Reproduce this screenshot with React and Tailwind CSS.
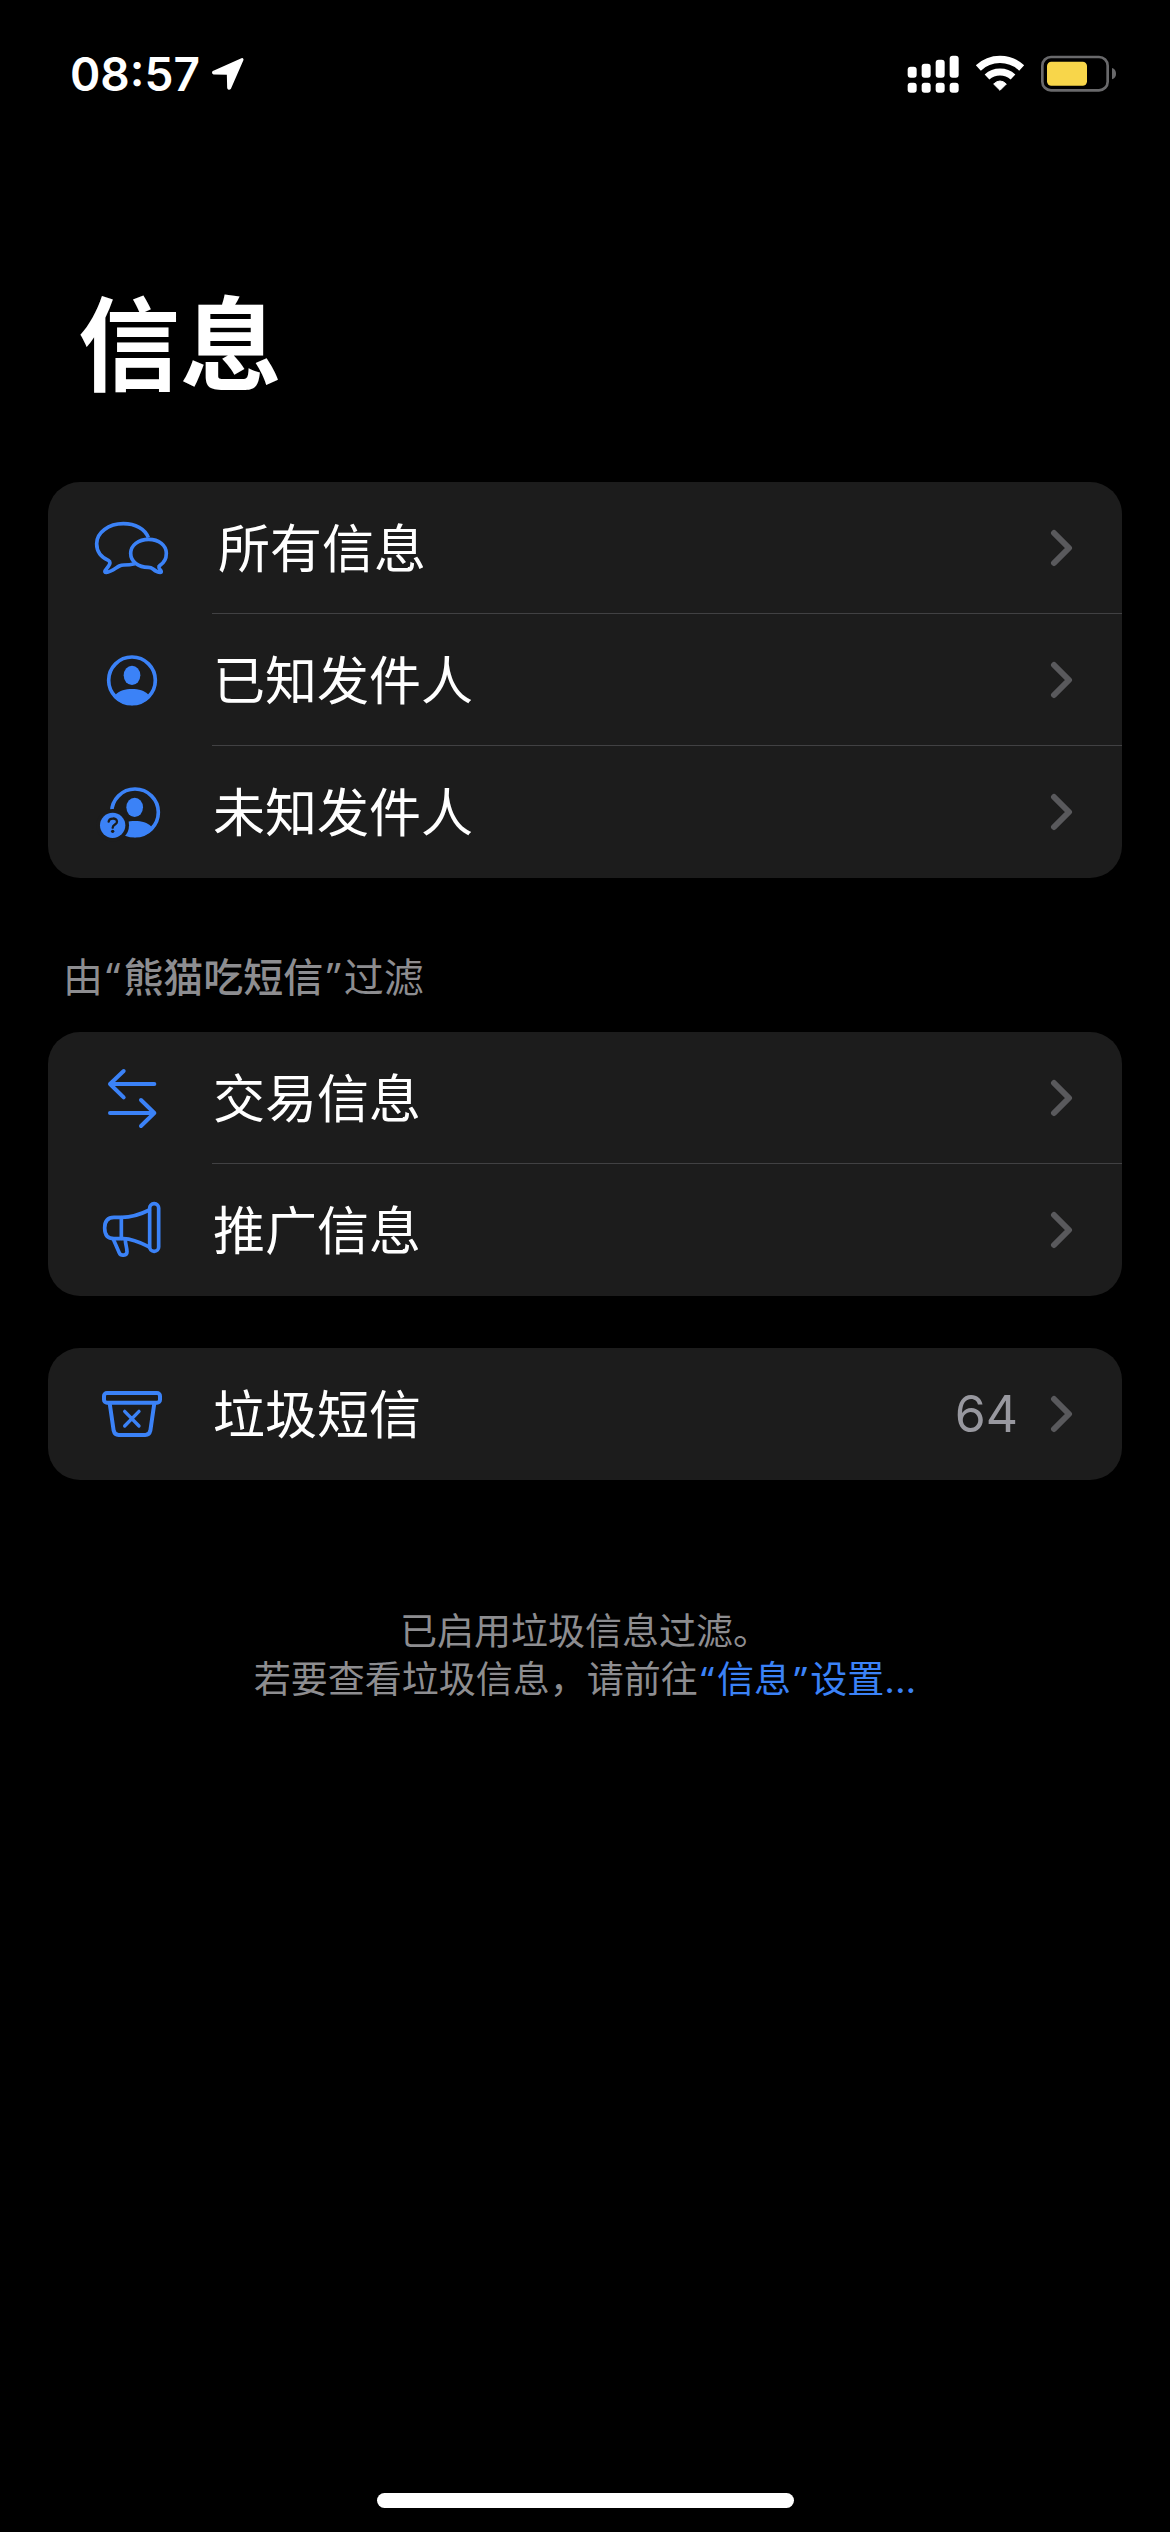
function SignalIcon() {
  return (
    <svg width="52" height="38" viewBox="79 76 156 114" fill="#fff" aria-hidden="true">
      <rect x="81" y="111" width="27" height="33" rx="9" />
      <rect x="123" y="102" width="27" height="42" rx="9" />
      <rect x="165" y="90" width="27" height="54" rx="9" />
      <rect x="207" y="78" width="27" height="66" rx="9" />
      <rect x="81" y="159" width="27" height="30" rx="9" />
      <rect x="123" y="159" width="27" height="30" rx="9" />
      <rect x="165" y="159" width="27" height="30" rx="9" />
      <rect x="207" y="159" width="27" height="30" rx="9" />
    </svg>
  );
}

function WifiIcon() {
  return (
    <svg width="50" height="38" viewBox="282 76 150 114" fill="none" stroke="#fff" aria-hidden="true">
      <path d="M292 115 A95 95 0 0 1 422 115" strokeWidth="22" />
      <path d="M318 142 A58 58 0 0 1 396 142" strokeWidth="21" />
      <path d="M338 163 Q357 145 376 163 L357 182 Z" fill="#fff" strokeWidth="3" strokeLinejoin="round" />
    </svg>
  );
}

function BatteryIcon() {
  return (
    <svg width="76" height="38" viewBox="480 76 228 114" aria-hidden="true">
      <rect x="484" y="82" width="196" height="100" rx="26" fill="none" stroke="#69696b" strokeWidth="8" />
      <rect x="498" y="96" width="120" height="72" rx="13" fill="#f8d64a" />
      <path d="M693 115 Q705 119 705 132 Q705 145 693 149 Z" fill="#69696b" />
    </svg>
  );
}

function LocationIcon() {
  return (
    <svg width="32" height="32" viewBox="512 83 96 96" aria-hidden="true">
      <path
        d="M602 88 L565 173 Q563 175 562 172 L561 132 Q561 129 558 129 L518 128 Q515 127 518 125 Z"
        fill="#fff"
        stroke="#fff"
        strokeWidth="9"
        strokeLinejoin="round"
      />
    </svg>
  );
}

function ChatIcon() {
  return (
    <svg width="77" height="72" viewBox="168 126 231 216" className="overflow-visible" fill="none" stroke="#3b82f7" strokeWidth="11" strokeLinejoin="round" aria-hidden="true">
      <path d="M325 203 C315 176 286 161 250 161 C206 161 170 187 170 221 C170 243 183 261 205 271 C212 275 211 281 205 289 L196 301 Q192 307 199 307 C214 306 228 293 238 288 Q244 285 252 285 C264 285 273 284 284 281" />
      <path d="M326 208 C295 208 272 226 272 250 C272 275 295 292 325 292 Q333 292 339 297 C346 303 352 307 361 307 Q366 307 362 301 C357 295 354 290 360 286 C373 278 379 266 379 250 C379 226 357 208 326 208 Z" />
    </svg>
  );
}

function PersonIcon() {
  return (
    <svg width="72" height="72" viewBox="168 522 216 216" aria-hidden="true">
      <circle cx="276" cy="631" r="70" fill="none" stroke="#3b82f7" strokeWidth="11" />
      <ellipse cx="276" cy="616" rx="25" ry="29" fill="#3b82f7" />
      <path d="M228 673 C238 662 256 657 276 657 C296 657 314 662 324 673 L330 682 A74 74 0 0 1 222 682 Z" fill="#3b82f7" />
    </svg>
  );
}

function UnknownPersonIcon() {
  return (
    <svg width="72" height="72" viewBox="168 918 216 216" aria-hidden="true">
      <circle cx="285" cy="1027" r="70" fill="none" stroke="#3b82f7" strokeWidth="11" />
      <ellipse cx="284" cy="1012" rx="25" ry="29" fill="#3b82f7" />
      <path d="M237 1069 C247 1058 265 1053 285 1053 C305 1053 323 1058 333 1069 L339 1078 A74 74 0 0 1 231 1078 Z" fill="#3b82f7" />
      <circle cx="218" cy="1066" r="49" fill="#1c1c1c" />
      <circle cx="218" cy="1066" r="38" fill="#3b82f7" />
      <path d="M206 1055 C207 1043 231 1042 231 1055 C231 1064 218 1063 218 1073" fill="none" stroke="#1c1c1c" strokeWidth="7" strokeLinecap="round" />
      <circle cx="218" cy="1084" r="5" fill="#1c1c1c" />
    </svg>
  );
}

function TransferIcon() {
  return (
    <svg width="72" height="72" viewBox="168 396 216 216" fill="none" stroke="#3b82f7" strokeWidth="12" strokeLinecap="round" strokeLinejoin="round" aria-hidden="true">
      <path d="M343 462 H210 M251 423 L210 462 L251 502" />
      <path d="M210 549 H343 M303 510 L343 549 L303 588" />
    </svg>
  );
}

function MegaphoneIcon() {
  return (
    <svg width="72" height="72" viewBox="168 792 216 216" fill="none" stroke="#3b82f7" strokeWidth="11" strokeLinecap="round" strokeLinejoin="round" aria-hidden="true">
      <rect x="329" y="821" width="27" height="143" rx="13" />
      <path d="M328 840 C304 852 276 862 245 862 H222 C204 862 194 873 194 894 C194 915 204 926 222 926 H250 C282 927 306 940 328 951" />
      <path d="M244 863 V925" />
      <path d="M220 928 L238 969 C242 978 261 978 261 965 C261 953 256 942 256 929" />
    </svg>
  );
}

function JunkIcon() {
  return (
    <svg width="72" height="72" viewBox="168 144 216 216" fill="none" stroke="#3b82f7" strokeWidth="12" strokeLinecap="round" strokeLinejoin="round" aria-hidden="true">
      <rect x="192" y="189" width="168" height="29" rx="9" />
      <path d="M209 220 L221 302 Q224 315 236 315 H316 Q328 315 331 302 L343 220" />
      <path d="M254 244 L297 288 M297 244 L254 288" strokeWidth="10" />
    </svg>
  );
}

function Chevron() {
  return (
    <svg width="24" height="38" viewBox="0 0 24 38" fill="none" stroke="#59595c" strokeWidth="6" strokeLinecap="round" strokeLinejoin="round" aria-hidden="true">
      <path d="M4 4 L19 19 L4 34" />
    </svg>
  );
}

function Row({ icon, label, count }) {
  return (
    <li className="relative not-last:after:absolute not-last:after:right-0 not-last:after:bottom-0 not-last:after:left-[164px] not-last:after:h-px not-last:after:bg-[#414143]">
      <button type="button" className="flex h-[132px] w-full items-center px-12 text-left">
        <span className="mr-[45px] shrink-0">{icon}</span>
        <span className="flex-1 pt-1 text-[52px] leading-[72px] text-white">{label}</span>
        {count && <span className="mr-8 text-[50px] leading-[72px] text-[#98989f]">{count}</span>}
        <Chevron />
      </button>
    </li>
  );
}

function Card({ className = "", children }) {
  return <ul className={"mx-12 overflow-hidden rounded-[32px] bg-[#1c1c1c] " + className}>{children}</ul>;
}

function Quote({ children }) {
  return <span className="mx-[3px] font-['Noto_Sans',sans-serif] leading-none">{children}</span>;
}

export default function App() {
  return (
    <div lang="zh-CN" className="flex min-h-screen flex-col bg-black font-['Inter','Noto_Sans_CJK_SC',sans-serif] font-normal">
      <header className="flex h-[148px] items-center justify-between pr-[53px] pl-[70px]">
        <div className="flex items-center gap-3 text-white">
          <time className="text-[46px] leading-none font-semibold">08:57</time>
          <LocationIcon />
        </div>
        <div className="flex items-center gap-4">
          <SignalIcon />
          <WifiIcon />
          <BatteryIcon />
        </div>
      </header>

      <main>
        <h1 className="mt-[138px] mb-[76px] px-[78px] text-[102px] leading-[120px] font-bold text-white">信息</h1>

        <Card>
          <Row icon={<ChatIcon />} label="所有信息" />
          <Row icon={<PersonIcon />} label="已知发件人" />
          <Row icon={<UnknownPersonIcon />} label="未知发件人" />
        </Card>

        <h2 className="mt-[76px] mb-[30px] px-[63px] text-[40px] leading-[48px] text-[#8d8d90]">
          由<Quote>“</Quote>
          <span className="font-medium">熊猫吃短信</span>
          <Quote>”</Quote>过滤
        </h2>
        <Card>
          <Row icon={<TransferIcon />} label="交易信息" />
          <Row icon={<MegaphoneIcon />} label="推广信息" />
        </Card>

        <Card className="mt-[52px]">
          <Row icon={<JunkIcon />} label="垃圾短信" count="64" />
        </Card>

        <p className="mt-32 px-12 text-center text-[37px] leading-[48px] text-[#8d8d90]">
          已启用垃圾信息过滤。
          <br />
          若要查看垃圾信息，请前往
          <a href="#settings" className="text-[#3b82f7]">
            <Quote>“</Quote>信息<Quote>”</Quote>设置...
          </a>
        </p>
      </main>

      <div className="mx-auto mt-auto mb-6 h-[15px] w-[417px] rounded-full bg-white" />
    </div>
  );
}
